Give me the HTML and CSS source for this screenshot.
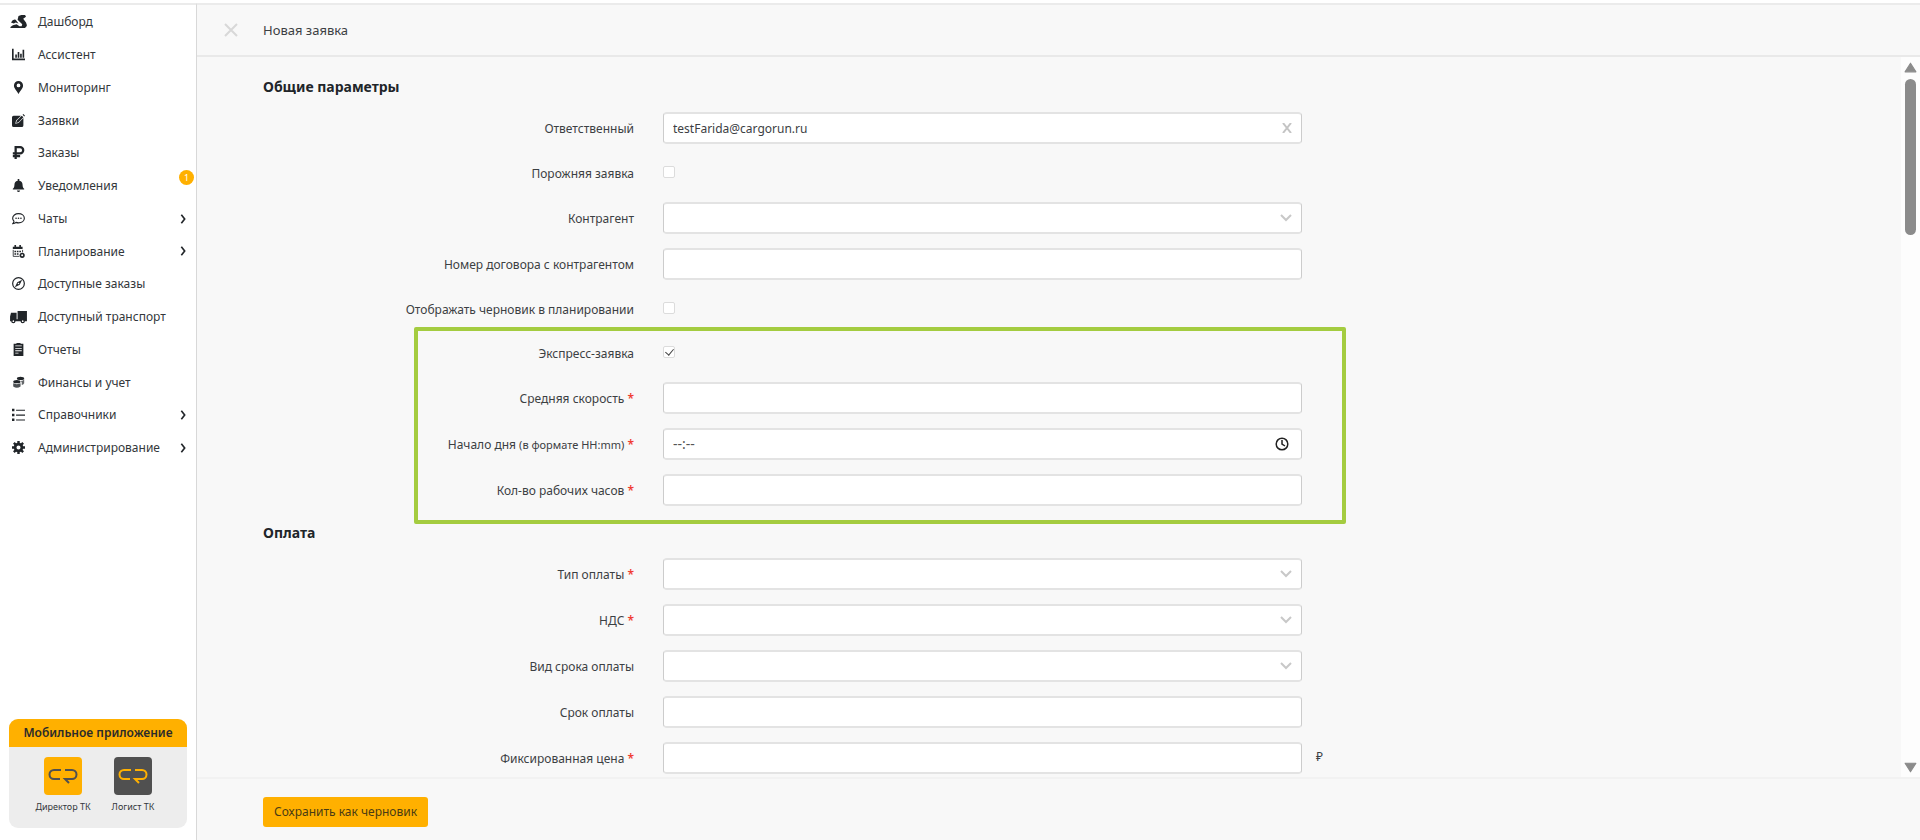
FILE: index.html
```html
<!DOCTYPE html>
<html lang="ru">
<head>
    <meta charset="UTF-8">
    <meta name="viewport" content="width=device-width, initial-scale=1.0">
    <title>Новая заявка</title>
    <link rel="stylesheet" href="styles.css">
</head>
<body>
    <aside class="sidebar">
        <nav>
            <ul class="menu">
                <li><a href="#"><svg class="icon wide" viewBox="0 0 18 16"><path d="M9 2l3-1h4l1 2-3 2 3 4 1 3-1 2h-5l1-3-5-5zM1 9q2-4 5-3l3 4-3-1-2 1zM0 14l3-2 4-1 3 2h7l-1 2H1z"/></svg>Дашборд</a></li>
                <li><a href="#"><svg class="icon" viewBox="0 0 16 16"><path d="M0 1h2v12h14v2H0zM4 8h2v4H4zM7 5h2v7H7zM10 7h2v5h-2zM13 2h2v10h-2z"/></svg>Ассистент</a></li>
                <li><a href="#"><svg class="icon" viewBox="0 0 16 16"><path fill-rule="evenodd" d="M8 0a5.6 5.6 0 0 0-5.6 5.6C2.400 9 5 11 8 16c3-5 5.600-7 5.600-10.400A5.600 5.600 0 0 0 8 0zm0 3.200a2.300 2.300 0 1 1 0 4.600 2.300 2.300 0 0 1 0-4.600z"/></svg>Мониторинг</a></li>
                <li><a href="#"><svg class="icon" viewBox="0 0 16 16"><path d="M2 2h9L5 8l-1 4 4-1 6-6v9q0 2-2 2H2q-2 0-2-2V4q0-2 2-2z"/><path d="M12 2l2 2-6 6-3 1 1-3zM13 1l1-1 2 2-1 1z"/></svg>Заявки</a></li>
                <li><a href="#"><svg class="icon" viewBox="0 0 16 16"><path d="M4.500 16V1.500H10a3.800 3.800 0 0 1 0 7.600H1M1 12.500h9" fill="none" stroke="currentColor" stroke-width="2.800"/></svg>Заказы</a></li>
                <li><a href="#"><svg class="icon" viewBox="0 0 16 16"><path d="M7 0h2v2c3 .5 4 3 4 5 0 3 1 4 2 5v1H1v-1c1-1 2-2 2-5 0-2 1-4.500 4-5zM6 14h4q-.5 2-2 2t-2-2z"/></svg>Уведомления<span class="badge">1</span></a></li>
                <li><a href="#"><svg class="icon" viewBox="0 0 16 16"><path d="M8 2c4 0 7.200 2.400 7.200 5.700S12 13.400 8 13.400c-1.200 0-2-.2-3-.6-1 1-2.500 1.500-4 1.500 1-1 1.400-2 1.400-3C1.300 10.300.8 9 .8 7.700.8 4.400 4 2 8 2z" fill="none" stroke="currentColor" stroke-width="1.400"/><circle cx="5" cy="7.700" r="1"/><circle cx="8" cy="7.700" r="1"/><circle cx="11" cy="7.700" r="1"/></svg>Чаты<svg class="arrow" viewBox="0 0 8 12"><path d="M2 1l4 5-4 5"/></svg></a></li>
                <li><a href="#"><svg class="icon" viewBox="0 0 16 16"><path d="M1 2h2V0h2v2h4V0h2v2h2v3H1z"/><path d="M1.500 6v8H9M13 6v3" fill="none" stroke="currentColor"/><path d="M3 7h2v2H3zM6 7h2v2H6zM9 7h2v2H9zM3 10h2v2H3zM6 10h2v2H6z"/><circle cx="12.500" cy="12.700" r="2.200" fill="none" stroke="currentColor" stroke-width="2"/></svg>Планирование<svg class="arrow" viewBox="0 0 8 12"><path d="M2 1l4 5-4 5"/></svg></a></li>
                <li><a href="#"><svg class="icon" viewBox="0 0 16 16"><circle cx="8" cy="8" r="7.200" fill="none" stroke="currentColor" stroke-width="1.500"/><path fill-rule="evenodd" d="M12.500 3.500l-3 6-6 3 3-6zM8 7a1 1 0 1 0 0 2 1 1 0 0 0 0-2z"/></svg>Доступные заказы</a></li>
                <li><a href="#"><svg class="icon wide" viewBox="0 0 18 16"><path d="M8 2h10v9H8zM1 4h6v7H0V8zM0 11h18v2H0z"/><g fill="#fff" stroke="currentColor" stroke-width="1.400"><circle cx="3.500" cy="13" r="1.600"/><circle cx="13.500" cy="13" r="1.600"/></g></svg>Доступный транспорт</a></li>
                <li><a href="#"><svg class="icon" viewBox="0 0 16 16"><path fill-rule="evenodd" d="M2 1h3l1-1h4l1 1h3v15H2zM4 4h8V3H4zM4 6v1h8V6zM4 9v1h8V9zM4 12v1h4v-1z"/></svg>Отчеты</a></li>
                <li><a href="#"><svg class="icon" viewBox="0 0 16 16"><ellipse cx="10.500" cy="3" rx="4.500" ry="2"/><path d="M11 6q3 0 4-2v5q-1 2-3 2V8z" opacity=".7"/><ellipse cx="6" cy="7" rx="4.500" ry="2"/><path d="M1.500 9q4.500 2 9 0v4q-4.500 3-9 0z" opacity=".8"/></svg>Финансы и учет</a></li>
                <li><a href="#"><svg class="icon" viewBox="0 0 16 16"><path d="M0 1h3v3H0zM0 7h3v3H0zM0 13h3v3H0zM5 2h11v1.500H5zM5 8h11v1.500H5zM5 14h11v1.500H5z"/></svg>Справочники<svg class="arrow" viewBox="0 0 8 12"><path d="M2 1l4 5-4 5"/></svg></a></li>
                <li><a href="#"><svg class="icon" viewBox="0 0 16 16"><circle cx="8" cy="8" r="4.200" fill="none" stroke="currentColor" stroke-width="3.400"/><path d="M8 0v3M8 13v3M0 8h3M13 8h3M2.300 2.300l2 2M11.700 11.700l2 2M2.300 13.700l2-2M11.700 4.300l2-2" stroke="currentColor" stroke-width="3"/></svg>Администрирование<svg class="arrow" viewBox="0 0 8 12"><path d="M2 1l4 5-4 5"/></svg></a></li>
            </ul>
        </nav>
        <section class="mobile">
            <h2>Мобильное приложение</h2>
            <div class="apps">
                <a href="#" class="app">
                    <svg class="logo" viewBox="0 0 38 38"><path d="M17 13h-7a4.500 4.500 0 0 0 0 9h6M21 13h7a4.500 4.500 0 0 1 0 9h-7l4 4" fill="none" stroke="currentColor" stroke-width="2"/></svg>
                    Директор ТК
                </a>
                <a href="#" class="app">
                    <svg class="logo dark" viewBox="0 0 38 38"><path d="M17 13h-7a4.500 4.500 0 0 0 0 9h6M21 13h7a4.500 4.500 0 0 1 0 9h-7l4 4" fill="none" stroke="currentColor" stroke-width="2"/></svg>
                    Логист ТК
                </a>
            </div>
        </section>
    </aside>

    <main class="page">
        <header class="page-header">
            <button type="button" class="close" aria-label="Закрыть"><svg viewBox="0 0 14 14"><path d="M1 1l12 12M13 1L1 13"/></svg></button>
            <h1>Новая заявка</h1>
        </header>

        <div class="scroll-area">
            <form class="form" id="order">
                <h3>Общие параметры</h3>
                <div class="row">
                    <label for="responsible">Ответственный</label>
                    <div class="field">
                        <input type="text" id="responsible" value="testFarida@cargorun.ru">
                        <button type="button" class="clear" aria-label="Очистить"><svg viewBox="0 0 10 10"><path d="M1 0l8 10M9 0L1 10"/></svg></button>
                    </div>
                </div>
                <div class="row check">
                    <label for="empty">Порожняя заявка</label>
                    <div class="field"><input type="checkbox" id="empty"></div>
                </div>
                <div class="row">
                    <label for="contractor">Контрагент</label>
                    <div class="field"><select id="contractor"><option></option></select><svg class="chevron" viewBox="0 0 12 8"><path d="M1 1l5 5 5-5"/></svg></div>
                </div>
                <div class="row">
                    <label for="contract">Номер договора с контрагентом</label>
                    <div class="field"><input type="text" id="contract"></div>
                </div>
                <div class="row check">
                    <label for="draft">Отображать черновик в планировании</label>
                    <div class="field"><input type="checkbox" id="draft"></div>
                </div>

                <div class="express">
                    <div class="row check">
                        <label for="express">Экспресс-заявка</label>
                        <div class="field"><input type="checkbox" id="express" checked></div>
                    </div>
                    <div class="row">
                        <label for="speed">Средняя скорость <i>*</i></label>
                        <div class="field"><input type="text" id="speed"></div>
                    </div>
                    <div class="row">
                        <label for="start">Начало дня <small>(в формате HH:mm)</small> <i>*</i></label>
                        <div class="field">
                            <input type="text" id="start" placeholder="--:--">
                            <svg class="clock" viewBox="0 0 14 14"><circle cx="7" cy="7" r="5.800"/><path d="M7 3v4l3 2"/></svg>
                        </div>
                    </div>
                    <div class="row">
                        <label for="hours">Кол-во рабочих часов <i>*</i></label>
                        <div class="field"><input type="text" id="hours"></div>
                    </div>
                </div>

                <h3>Оплата</h3>
                <div class="row">
                    <label for="paytype">Тип оплаты <i>*</i></label>
                    <div class="field"><select id="paytype"><option></option></select><svg class="chevron" viewBox="0 0 12 8"><path d="M1 1l5 5 5-5"/></svg></div>
                </div>
                <div class="row">
                    <label for="vat">НДС <i>*</i></label>
                    <div class="field"><select id="vat"><option></option></select><svg class="chevron" viewBox="0 0 12 8"><path d="M1 1l5 5 5-5"/></svg></div>
                </div>
                <div class="row">
                    <label for="termtype">Вид срока оплаты</label>
                    <div class="field"><select id="termtype"><option></option></select><svg class="chevron" viewBox="0 0 12 8"><path d="M1 1l5 5 5-5"/></svg></div>
                </div>
                <div class="row">
                    <label for="term">Срок оплаты</label>
                    <div class="field"><input type="text" id="term"></div>
                </div>
                <div class="row">
                    <label for="price">Фиксированная цена <i>*</i></label>
                    <div class="field"><input type="text" id="price"><span class="unit">₽</span></div>
                </div>
            </form>
            <div class="scrollbar" aria-hidden="true">
                <svg viewBox="0 0 12 10"><path d="M6 1l5 8H1z"/></svg>
                <div class="track"><div class="thumb"></div></div>
                <svg viewBox="0 0 12 10"><path d="M1 1h10L6 9z"/></svg>
            </div>
        </div>

        <footer class="page-footer">
            <button type="submit" form="order" class="save">Сохранить как черновик</button>
        </footer>
    </main>
</body>
</html>
```

FILE: styles.css
```css
* {
    box-sizing: border-box;
}
body {
    margin: 0;
    height: 100vh;
    display: flex;
    padding-top: 3px;
    font-family: "Noto Sans", "Open Sans", sans-serif;
    font-size: 12px;
    color: #3c4043;
    background: #fff;
}
h1, h2, h3, ul {
    margin: 0;
    padding: 0;
}
button {
    border: 0;
    padding: 0;
    background: none;
    font: inherit;
    cursor: pointer;
}

/* Sidebar */
.sidebar {
    flex: 0 0 197px;
    display: flex;
    flex-direction: column;
    justify-content: space-between;
    border-top: 2px solid #ebebeb;
    border-right: 1px solid #d8d8d8;
}
.menu {
    list-style: none;
}
.menu a {
    position: relative;
    display: flex;
    align-items: center;
    height: 33px;
    padding: 0 9px 0 12px;
    color: #33373b;
    text-decoration: none;
    white-space: nowrap;
}
.menu li:nth-child(4n) a {
    height: 32px;
}
.icon {
    width: 13px;
    height: 13px;
    margin-right: 13px;
    fill: #212529;
    color: #212529;
    flex: none;
}
.icon.wide {
    width: 17px;
    height: 15px;
    margin: 0 11px 0 -2px;
}
.arrow {
    width: 8px;
    height: 10px;
    margin-left: auto;
    fill: none;
    stroke: #212529;
    stroke-width: 2;
}
.badge {
    position: absolute;
    top: 1px;
    right: 2px;
    width: 15px;
    border-radius: 50%;
    background: #ffb000;
    color: #fff;
    font-size: 9px;
    line-height: 15px;
    text-align: center;
}
.mobile {
    margin: 0 9px 12px;
    border-radius: 9px;
    overflow: hidden;
    background: #ededed;
}
.mobile h2 {
    background: #ffb000;
    color: #2b2b2b;
    font-size: 12px;
    font-weight: 600;
    line-height: 28px;
    text-align: center;
    white-space: nowrap;
}
.apps {
    display: flex;
    justify-content: center;
    padding: 10px 0 13px;
}
.app {
    width: 70px;
    display: flex;
    flex-direction: column;
    align-items: center;
    gap: 4px;
    font-size: 9px;
    line-height: 16px;
    color: #33373b;
    text-decoration: none;
    white-space: nowrap;
}
.logo {
    width: 38px;
    height: 38px;
    border-radius: 4px;
    background: #ffb000;
    color: #505050;
}
.logo.dark {
    background: #505050;
    color: #ffb000;
}

/* Page */
.page {
    flex: 1;
    min-width: 0;
    display: flex;
    flex-direction: column;
    background: #f8f8f8;
    border-top: 2px solid #ebebeb;
}
.page-header {
    display: flex;
    align-items: center;
    height: 52px;
    padding-left: 27px;
    border-bottom: 2px solid #e9e9e9;
}
.close {
    width: 14px;
    height: 14px;
    margin-right: 25px;
}
.close svg, .clear svg {
    display: block;
    fill: none;
    stroke: #d8d8d8;
    stroke-width: 2;
}
.page-header h1 {
    font-size: 13px;
    font-weight: 400;
}
.scroll-area {
    flex: 1;
    min-height: 0;
    display: flex;
    justify-content: space-between;
    overflow: hidden;
}
.form {
    flex: 0 1 1105px;
    padding: 17px 0 0 66px;
}
.form h3 {
    color: #212529;
    font-size: 14px;
    font-weight: 700;
    line-height: 26px;
    margin-bottom: 12px;
}
.row {
    display: flex;
    align-items: center;
    height: 32px;
    margin-bottom: 14px;
}
.row.check {
    height: 30px;
}
.row label {
    flex: 0 0 371px;
    margin-right: 29px;
    text-align: right;
}
.row label i {
    color: #f03c32;
    font-style: normal;
    font-weight: 600;
}
.row small {
    font-size: 11px;
}
.field {
    position: relative;
    flex: 1;
    display: flex;
}
.field input[type="text"], .field select {
    width: 100%;
    height: 32px;
    padding: 0 9px;
    border: 1px solid #ccc;
    border-width: 2px 1px;
    border-color: #e3e3e3 #ccc;
    border-radius: 4px;
    background: #fff;
    color: #3c4043;
    font: inherit;
    appearance: none;
}
.field input::placeholder {
    color: #555;
    font-size: 14px;
}
.field input[type="checkbox"] {
    width: 12px;
    height: 12px;
    margin: 0 0 2px;
    border: 1px solid #dcdcdc;
    border-radius: 2px;
    background: #fff;
    appearance: none;
}
.field input[type="checkbox"]:checked::before {
    content: "";
    display: block;
    width: 4px;
    height: 7px;
    margin: 0 auto;
    border: solid #444;
    border-width: 0 1px 1px 0;
    transform: rotate(40deg);
}
.clear, .chevron, .clock {
    position: absolute;
    top: 50%;
    right: 10px;
    transform: translateY(-50%);
    fill: none;
    stroke: #c8c8c8;
    stroke-width: 2;
}
.clear {
    width: 10px;
    height: 10px;
}
.clear svg {
    width: 10px;
    height: 10px;
    stroke: #c4c4c4;
}
.chevron {
    width: 12px;
    height: 8px;
    pointer-events: none;
}
.clock {
    right: 13px;
    width: 14px;
    height: 14px;
    stroke: #222;
    stroke-width: 1.5;
}
.unit {
    position: absolute;
    left: 100%;
    margin-left: 14px;
    line-height: 30px;
}

/* Highlighted group */
.express {
    position: relative;
    margin-bottom: 14px;
}
.express::after {
    content: "";
    position: absolute;
    inset: -11px -44px -18px 151px;
    border: 4px solid #a4cc40;
    border-radius: 2px;
    pointer-events: none;
}
.express .row:last-child {
    margin-bottom: 0;
}

/* Scrollbar */
.scrollbar {
    flex: 0 0 19px;
    display: flex;
    flex-direction: column;
    align-items: center;
    padding: 5px 0 4px;
    background: #fdfdfd;
}
.scrollbar svg {
    width: 13px;
    height: 11px;
    fill: #8b8b8b;
    stroke: #8b8b8b;
    stroke-linejoin: round;
}
.track {
    flex: 1;
    width: 11px;
    padding: 6px 0;
}
.thumb {
    height: 23%;
    border-radius: 6px;
    background: #8b8b8b;
}

.page-footer {
    display: flex;
    align-items: center;
    height: 63px;
    padding: 4px 66px 0;
    border-top: 2px solid #f2f2f2;
}
.save {
    height: 30px;
    padding: 0 11px;
    border-radius: 3px;
    background: #ffb000;
    color: #4a3c14;
}
```
